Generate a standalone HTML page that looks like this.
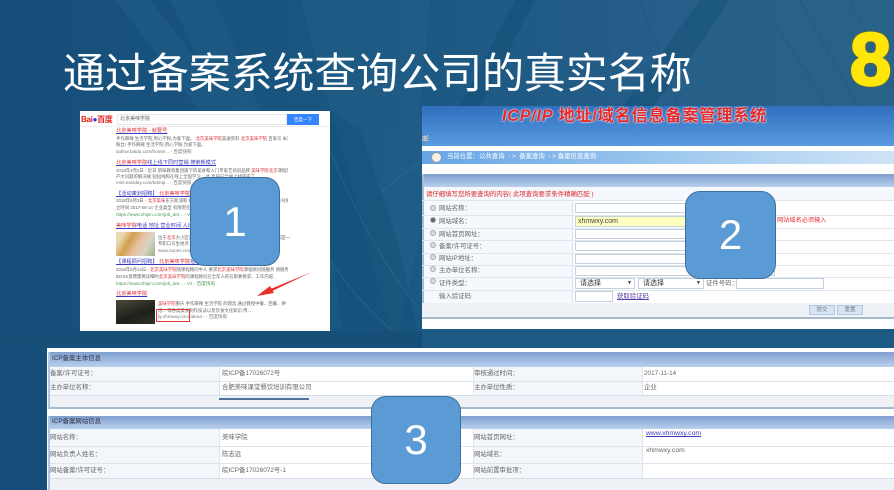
<!DOCTYPE html>
<html lang="zh"><head><meta charset="utf-8"><title>通过备案系统查询公司的真实名称</title>
<style>
html,body{margin:0;padding:0;width:894px;height:490px;overflow:hidden;background:#155079}
body{position:relative;font-family:"Liberation Sans","Noto Sans CJK SC",sans-serif}
.a,.a div,.l{position:absolute;white-space:nowrap}
.a{overflow:hidden}
.title{position:absolute;left:63px;top:46px;font-size:42px;line-height:56px;color:#fff;white-space:nowrap;letter-spacing:-.1px}
.eight{position:absolute;left:850px;top:16px;font-size:74px;line-height:88px;font-weight:bold;color:#ffe60a;-webkit-text-stroke:2.5px #ffe60a;filter:drop-shadow(0 0 1px #8a6a10)}
.box{position:absolute;background:#5b9bd5;border:1px solid #3f6f9c;border-radius:15px;color:#fff;font-size:42px;text-align:center;box-sizing:border-box;display:flex;align-items:center;justify-content:center}
.b{color:#666;font-size:4.4px;line-height:7px;filter:blur(.35px);max-width:172px;overflow:hidden}
.s{max-width:132px}
.t{color:#3a3ac0;font-size:5.2px;line-height:9px;text-decoration:underline;filter:blur(.3px)}
.t i,.b i{color:#d8303a;font-style:normal}
.u{color:#4a9a55;font-size:4.6px;line-height:7px;filter:blur(.35px)}
.in{background:#fff;border:1px solid #c3d0de;box-sizing:border-box}
.rw{left:0;width:472px;height:1px;background:#dfe6ee}
.c{font-size:6.4px;line-height:10px;color:#666;filter:blur(.3px)}
.hd{background:linear-gradient(#7f9fcf,#b9d0ee)}
.r{left:8px;width:6px;height:6px;border-radius:3px;background:#ddd;border:1px solid #aaa;box-sizing:border-box}
</style></head><body>

<svg width="894" height="490" style="position:absolute;left:0;top:0">
<defs><linearGradient id="g" x1="0" x2="1" y1="0" y2="0"><stop offset="0" stop-color="#164f79"/><stop offset=".4" stop-color="#195680"/><stop offset=".75" stop-color="#265f89"/><stop offset="1" stop-color="#296389"/></linearGradient></defs>
<rect width="894" height="490" fill="url(#g)"/>
<g fill="#2e6a92" opacity=".25">
<polygon points="115,0 150,0 235,110 200,110"/>
<polygon points="170,0 215,0 260,110 225,110"/>
<polygon points="300,0 400,0 432,180 395,350 345,160"/>
<polygon points="375,0 430,0 420,110 400,70"/>
</g>
<g fill="#144f78" opacity=".5">
<polygon points="515,0 535,0 478,110 458,110"/>
<polygon points="700,0 730,0 700,45 650,110 620,110"/>
<polygon points="330,110 360,130 400,250 420,345 345,345 330,240"/>
</g>
<g stroke="#1b5a84" stroke-width="2" fill="none" opacity=".4">
<path d="M590 0L630 110M640 0L680 110M760 0L830 110M800 0L860 110M850 0L894 90"/>
</g>
<g stroke="#3d7aa2" stroke-width="1" fill="none" opacity=".4">
<path d="M330 150Q370 250 420 310M330 260Q370 320 420 350M380 193L422 160"/>
</g>
<rect x="0" y="331" width="422" height="18" fill="#164f78"/>
<rect x="422" y="329" width="472" height="20" fill="#1c5a83"/>
</svg>

<div class="title">通过备案系统查询公司的真实名称</div>
<div class="eight">8</div>

<!-- Panel 1 -->
<div class="a" style="left:80px;top:111px;width:250px;height:220px;background:#fff">
 <div style="left:1px;top:3px;font-size:8px;line-height:11px;font-weight:bold;color:#e0201c;filter:blur(.25px);letter-spacing:-.3px">Bai<span style="color:#2932e1">●</span>百度</div>
 <div style="left:37px;top:3px;width:170px;height:11px;border:1px solid #e8e8e8;box-sizing:border-box;font-size:5px;line-height:9px;color:#666;padding-left:2px;filter:blur(.25px)">北京美味学院</div>
 <div style="left:207px;top:3px;width:32px;height:11px;background:#3385ff;color:#fff;font-size:4.5px;line-height:11px;text-align:center">百度一下</div>
 <div style="left:0;top:15px;width:250px;height:1px;background:#eee"></div>

 <div class="t" style="left:36px;top:16px"><i>北京美味学院 - 就要号</i></div>
 <div class="b" style="left:36px;top:24px">手作麻辣 生活学院,用心学粉,为爱下面。 <i>北京美味学院</i>美通资料 <i>北京美味学院</i> 百家号 米注0</div>
 <div class="b" style="left:36px;top:30px">粉丝! 手作麻辣 生活学院,用心学粉,为爱下面。</div>
 <div class="u" style="left:36px;top:37px;color:#777">author.baidu.com/home/... - 百度快照</div>

 <div class="t" style="left:36px;top:48px"><i>北京美味学院</i>线上线下同时营销 搜索新模式</div>
 <div class="b" style="left:36px;top:56px">2018年4月2日 - 近日 新味教育集团旗下的美食和入门专家艺培训品牌 <i>美味学院北京</i>课程改革</div>
 <div class="b" style="left:36px;top:62px">产大问题的解决规 短短线和在线上全国学习... 此 高层已全线上线完成了</div>
 <div class="u" style="left:36px;top:68px;color:#777">mini.eastday.com/bdmip... - 百度快照</div>

 <div class="t" style="left:36px;top:79px">【活动策划招聘】 <i>北京美味学院</i></div>
 <div class="b" style="left:36px;top:86px">2018年6月3日 - <i>北京美味</i>东方新浦和 招聘岗位及要求 学历不限 经验不限 招聘人数 公司规模 成</div>
 <div class="b" style="left:36px;top:93px">立时间 2017-08-14 企业类型 有限责任公司 注册资本</div>
 <div class="u" style="left:36px;top:100px">https://www.zhipin.com/job_det... - V1 - 百度快照</div>

 <div class="t" style="left:36px;top:111px"><i>美味学院</i>电话 地址 营业时间 人均消费</div>
 <div style="left:36px;top:121px;width:39px;height:24px;background:linear-gradient(120deg,#e8d9b0 15%,#cfa04f 35%,#e8c0a0 55%,#d9d4c4 75%,#9bb08a)"></div>
 <div class="b s" style="left:78px;top:123px">位于<i>北京</i>大小区南 简介：美味学院地址 电话 人均消费 <i>美味</i>学院是一家面包 粉丝</div>
 <div class="b s" style="left:78px;top:129px">专职口号生地点 咨询 预约</div>
 <div class="u" style="left:78px;top:136px;color:#777">www.nuomi.com - 百度快照</div>

 <div class="t" style="left:36px;top:147px">【课程顾问招聘】 <i>北京美味学院</i>招聘</div>
 <div class="b" style="left:36px;top:155px">2018年6月14日 - <i>北京美味学院</i>随课程顾问中人 要求<i>北京美味学院</i>课程顾问随服务 请服务</div>
 <div class="b" style="left:36px;top:162px">BOSS直聘需要详细约<i>北京美味学院</i>的课程顾问在全年人的在职要要求、工作内容,</div>
 <div class="u" style="left:36px;top:169px">https://www.zhipin.com/job_det... - V1 - 百度快照</div>

 <div class="t" style="left:36px;top:179px"><i>北京美味学院</i></div>
 <div style="left:36px;top:189px;width:39px;height:24px;background:linear-gradient(160deg,#4a4a3c,#1f1f1a 60%,#33332a)"></div>
 <div class="b s" style="left:78px;top:189px"><i>美味学院</i>重庆 手作麻辣 生活学院 的理念,通过教授中餐、西餐、烘</div>
 <div class="b s" style="left:78px;top:196px">焙... 等各类美食制作技法以及饮食文化知识,传...</div>
 <div class="u" style="left:78px;top:202px;color:#777">bj.xhmwxy.com/about - - 百度快照</div>
 <div style="left:76px;top:198px;width:34px;height:13px;border:1px solid #e23a3a;box-sizing:border-box"></div>
 <svg style="position:absolute;left:170px;top:155px" width="70" height="35"><polygon points="62,6 18,24 20,26" fill="#e8302a"/><polygon points="7,30 20,20 24,27" fill="#e8302a"/></svg>
</div>

<!-- Panel 2 -->
<div class="a" style="left:422px;top:106px;width:472px;height:223px;background:#fff">
 <div style="left:0;top:0;width:472px;height:40px;background:linear-gradient(#2f6fbd,#5a9be2)"></div>
 <div style="left:80px;top:1px;font-size:16.2px;line-height:18px;font-weight:bold;color:#e8282a;text-shadow:0 0 2px #fff,0 0 1px #fff;letter-spacing:.75px"><span style="font-style:italic">ICP/IP</span> 地址/域名信息备案管理系统</div>
 <div style="left:0;top:29px;font-size:7px;line-height:9px;color:#fff;text-shadow:0 0 1px #333">邮</div>
 <div style="left:0;top:45px;width:472px;height:13px;background:linear-gradient(90deg,#66a5e6,#a6cdf0 60%,#cfe3f7)"></div>
 <div style="left:9px;top:46px;width:11px;height:11px;border-radius:6px;background:#f5f0e0;border:1px solid #8a9ab0;box-sizing:border-box"></div>
 <div class="c" style="left:25px;top:46px;color:#fff">当前位置：公共查询 &nbsp;- &gt; &nbsp;备案查询 &nbsp;- &gt; 备案信息查询</div>
 <div class="hd" style="left:0;top:68px;width:472px;height:13px"></div>
 <div style="left:0;top:81px;width:472px;height:131px;background:#f5f8fc"></div>
 <div style="left:0;top:68px;width:2px;height:144px;background:#a9bcd6"></div>
 <div class="c" style="left:4px;top:84px;color:#e02a2a">请仔细填写您所要查询的内容( 此项查询要求条件精确匹配 )</div>
 <div style="left:150px;top:94px;width:322px;height:103px;background:#fff"></div>
 <div style="left:150px;top:94px;width:1px;height:104px;background:#d8e0ea"></div>
 <div class="rw" style="top:94px"></div>
 <div class="rw" style="top:109px"></div><div class="rw" style="top:122px"></div><div class="rw" style="top:134px"></div><div class="rw" style="top:147px"></div><div class="rw" style="top:159px"></div><div class="rw" style="top:171px"></div><div class="rw" style="top:184px"></div><div class="rw" style="top:197px"></div>

 <div class="r" style="top:99px"></div>
 <div class="c" style="left:17px;top:98px">网站名称：</div>
 <div class="r" style="top:111px;background:#666"></div>
 <div class="c" style="left:17px;top:111px">网站域名：</div>
 <div class="r" style="top:124px"></div>
 <div class="c" style="left:17px;top:124px">网站首页网址：</div>
 <div class="r" style="top:136px"></div>
 <div class="c" style="left:17px;top:136px">备案/许可证号：</div>
 <div class="r" style="top:148px"></div>
 <div class="c" style="left:17px;top:148px">网站IP地址：</div>
 <div class="r" style="top:160px"></div>
 <div class="c" style="left:17px;top:160px">主办单位名称：</div>
 <div class="r" style="top:172px"></div>
 <div class="c" style="left:17px;top:173px">证件类型：</div>
 <div class="c" style="left:17px;top:186px">输入验证码:</div>

 <div class="in" style="left:153px;top:97px;width:200px;height:10px"></div>
 <div class="in" style="left:153px;top:110px;width:200px;height:11px;background:#ffffc0;font-size:7px;line-height:9px;color:#444;padding-left:2px">xhmwxy.com</div>
 <div class="in" style="left:153px;top:123px;width:200px;height:10px"></div>
 <div class="in" style="left:153px;top:135px;width:200px;height:10px"></div>
 <div class="in" style="left:153px;top:148px;width:200px;height:10px"></div>
 <div class="in" style="left:153px;top:160px;width:200px;height:10px"></div>
 <div class="in" style="left:153px;top:172px;width:60px;height:11px;font-size:7px;line-height:9px;color:#333;padding-left:4px">请选择<span style="position:absolute;right:2px;font-size:5px">▼</span></div>
 <div class="in" style="left:216px;top:172px;width:66px;height:11px;font-size:7px;line-height:9px;color:#333;padding-left:4px">请选择<span style="position:absolute;right:2px;font-size:5px">▼</span></div>
 <div class="c" style="left:284px;top:173px">证件号码：</div>
 <div class="in" style="left:314px;top:172px;width:88px;height:11px"></div>
 <div class="in" style="left:153px;top:185px;width:38px;height:11px"></div>
 <div class="c" style="left:195px;top:186px;color:#5a3fa8;text-decoration:underline">获取验证码</div>
 <div class="c" style="left:355px;top:110px;color:#e8303a;font-size:6.2px">网站域名必须输入</div>

 <div style="left:0;top:197px;width:472px;height:15px;background:#eef1f6"></div>
 <div style="left:387px;top:199px;width:26px;height:10px;background:#d5e3f2;border:1px solid #b5c7da;box-sizing:border-box;font-size:5.5px;line-height:8px;text-align:center;color:#778">提交</div>
 <div style="left:415px;top:199px;width:26px;height:10px;background:#d5e3f2;border:1px solid #b5c7da;box-sizing:border-box;font-size:5.5px;line-height:8px;text-align:center;color:#778">重置</div>
 <div style="left:0;top:211px;width:472px;height:2px;background:#a9b9cc"></div>
</div>

<!-- Panel 3 -->
<div class="a" style="left:47px;top:348px;width:847px;height:142px;background:#fff">
 <div class="hd" style="left:1px;top:4px;width:846px;height:15px"></div>
 <div style="left:1px;top:19px;width:846px;height:40px;background:#fff"></div>
 <div style="left:1px;top:19px;width:172px;height:28px;background:#f3f7fc"></div>
 <div style="left:426px;top:19px;width:169px;height:28px;background:#f3f7fc"></div>
 <div style="left:1px;top:33px;width:846px;height:1px;background:#dde4ec"></div>
 <div style="left:1px;top:47px;width:846px;height:12px;background:#eef1f6;border-top:1px solid #d5dde6;box-sizing:border-box"></div>
 <div style="left:1px;top:59px;width:846px;height:2px;background:#a9b9cc"></div>
 <div style="left:1px;top:4px;width:2px;height:57px;background:#b4c5dc"></div>
 <div style="left:172px;top:19px;width:1px;height:28px;background:#dde4ec"></div>
 <div style="left:426px;top:19px;width:1px;height:28px;background:#dde4ec"></div>
 <div style="left:595px;top:19px;width:1px;height:28px;background:#dde4ec"></div>
 <div style="left:172px;top:50px;width:90px;height:2px;background:#4f74a0"></div>
 <div class="c" style="left:5px;top:6px;color:#334">ICP备案主体信息</div>
 <div class="c" style="left:3px;top:21px">备案/许可证号：</div>
 <div class="c" style="left:175px;top:21px">皖ICP备17026072号</div>
 <div class="c" style="left:427px;top:21px">审核通过时间：</div>
 <div class="c" style="left:597px;top:21px">2017-11-14</div>
 <div class="c" style="left:3px;top:35px">主办单位名称：</div>
 <div class="c" style="left:175px;top:35px">合肥美味课堂餐饮培训有限公司</div>
 <div class="c" style="left:427px;top:35px">主办单位性质：</div>
 <div class="c" style="left:597px;top:35px">企业</div>

 <div class="hd" style="left:1px;top:68px;width:846px;height:13px"></div>
 <div style="left:1px;top:81px;width:172px;height:49px;background:#f3f7fc"></div>
 <div style="left:426px;top:81px;width:169px;height:49px;background:#f3f7fc"></div>
 <div style="left:1px;top:98px;width:846px;height:1px;background:#dde4ec"></div>
 <div style="left:1px;top:115px;width:846px;height:1px;background:#dde4ec"></div>
 <div style="left:1px;top:130px;width:846px;height:12px;background:#eef1f6;border-top:1px solid #d5dde6;box-sizing:border-box"></div>
 <div style="left:1px;top:68px;width:2px;height:74px;background:#b4c5dc"></div>
 <div style="left:172px;top:81px;width:1px;height:49px;background:#dde4ec"></div>
 <div style="left:426px;top:81px;width:1px;height:49px;background:#dde4ec"></div>
 <div style="left:595px;top:81px;width:1px;height:49px;background:#dde4ec"></div>
 <div class="c" style="left:5px;top:69px;color:#334">ICP备案网站信息</div>
 <div class="c" style="left:3px;top:85px">网站名称：</div>
 <div class="c" style="left:175px;top:85px">美味学院</div>
 <div class="c" style="left:427px;top:85px">网站首页网址：</div>
 <div class="c" style="left:599px;top:81px;color:#3a3ac0;text-decoration:underline;font-size:6.8px">www.xhmwxy.com</div>
 <div class="c" style="left:3px;top:102px">网站负责人姓名：</div>
 <div class="c" style="left:175px;top:102px">陈志远</div>
 <div class="c" style="left:427px;top:102px">网站域名：</div>
 <div class="c" style="left:599px;top:98px;font-size:6.8px">xhmwxy.com</div>
 <div class="c" style="left:3px;top:118px">网站备案/许可证号：</div>
 <div class="c" style="left:175px;top:118px">皖ICP备17026072号-1</div>
 <div class="c" style="left:427px;top:118px">网站前置审批项：</div>
</div>

<div class="box" style="left:190px;top:177px;width:90px;height:89px">1</div>
<div class="box" style="left:685px;top:191px;width:91px;height:88px">2</div>
<div class="box" style="left:371px;top:396px;width:90px;height:88px">3</div>
</body></html>
